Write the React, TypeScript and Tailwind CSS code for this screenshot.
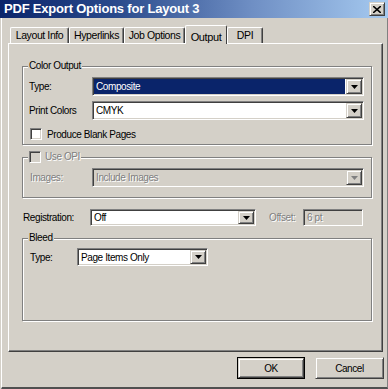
import React from "react";

const sunken =
  "border border-t-[#808080] border-l-[#808080] border-b-white border-r-white shadow-[inset_1px_1px_0_#404040,inset_-1px_-1px_0_#d4d0c8]";
const raised =
  "border border-t-[#d4d0c8] border-l-[#d4d0c8] border-b-[#404040] border-r-[#404040] shadow-[inset_1px_1px_0_#fff,inset_-1px_-1px_0_#808080]";
const etched = "border border-[#808080] shadow-[inset_1px_1px_0_#fff,1px_1px_0_#fff]";
const dimText = "text-[#808080] [text-shadow:1px_1px_0_#fff]";

const Arrow = ({ disabled }: { disabled?: boolean }) => (
  <div className={`w-[16px] h-full flex items-center justify-center bg-[#d4d0c8] ${raised}`}>
    <svg width="7" height="4" viewBox="0 0 7 4">
      <path d="M0 0h7L3.5 4z" fill={disabled ? "#808080" : "#000"} />
    </svg>
  </div>
);

const Select = ({
  value,
  width,
  height = "h-[19px]",
  selected,
  disabled,
}: {
  value: string;
  width: string;
  height?: string;
  selected?: boolean;
  disabled?: boolean;
}) => (
  <div
    className={`${width} ${height} flex items-stretch p-[1px] ${sunken} ${
      disabled ? "bg-[#d4d0c8]" : "bg-white"
    }`}
  >
    <div
      className={`flex-1 flex items-center pl-[2px] ${
        selected ? "bg-[#0a246a] text-white mr-[1px]" : disabled ? dimText : ""
      }`}
    >
      {value}
    </div>
    <Arrow disabled={disabled} />
  </div>
);

const Checkbox = ({ disabled }: { disabled?: boolean }) => (
  <div className={`w-[12px] h-[12px] ${sunken} ${disabled ? "bg-[#d4d0c8]" : "bg-white"}`} />
);

const Group = ({
  legend,
  className,
  children,
}: {
  legend: React.ReactNode;
  className: string;
  children: React.ReactNode;
}) => (
  <div className={`relative w-[350px] ${etched} ${className}`}>
    <div className="absolute -top-[7px] left-[5px] px-[1px] bg-[#d4d0c8] flex items-center gap-[4px] leading-[12px]">
      {legend}
    </div>
    {children}
  </div>
);

const tabs = [
  { label: "Layout Info", w: "w-[59px]" },
  { label: "Hyperlinks", w: "w-[55px]" },
  { label: "Job Options", w: "w-[61px]" },
  { label: "Output", w: "w-[42px]", active: true },
  { label: "DPI", w: "w-[36px]" },
];

export default function App() {
  return (
    <div className="w-[388px] h-[389px] bg-[#d4d0c8] flex flex-col overflow-hidden text-[10px] tracking-[-0.4px] text-black font-['Liberation_Sans',Arial,sans-serif]">
      {/* title bar */}
      <div className="h-[18px] shrink-0 flex items-center justify-between pl-[4px] pr-[3px] bg-[linear-gradient(90deg,#0a246a_0%,#2a4a8c_30%,#6f8fc4_65%,#a6caf0_100%)]">
        <span className="text-white font-bold text-[13px] tracking-[-0.2px]">
          PDF Export Options for Layout 3
        </span>
        <div className={`w-[16px] h-[14px] flex items-center justify-center bg-[#d4d0c8] ${raised}`}>
          <svg width="8" height="7" viewBox="0 0 8 7">
            <path d="M0 0l8 7M8 0L0 7" stroke="#000" strokeWidth="1.6" />
          </svg>
        </div>
      </div>

      {/* body */}
      <div className="flex-1 ml-px border-l border-white border-r border-r-[#808080] border-b-2 border-b-[#505050] flex flex-col">
        {/* tabs */}
        <div className="h-[25px] shrink-0 flex items-end pl-[8px]">
          {tabs.map((t) =>
            t.active ? (
              <div
                key={t.label}
                className={`${t.w} h-[19px] -mb-px relative z-10 bg-[#d4d0c8] border-t border-l border-white border-r border-r-[#404040] rounded-t-[2px] flex items-start justify-center pt-[3px] text-[11px]`}
              >
                {t.label}
              </div>
            ) : (
              <div
                key={t.label}
                className={`${t.w} h-[16px] border-t border-l border-white border-r border-r-[#404040] shadow-[inset_-1px_0_0_#808080] rounded-t-[2px] flex items-center justify-center text-[10.5px]`}
              >
                {t.label}
              </div>
            )
          )}
        </div>

        {/* panel */}
        <div className="ml-[6px] w-[375px] h-[309px] shrink-0 border-t border-l border-white border-r border-r-[#404040] border-b border-b-[#404040] shadow-[inset_-1px_-1px_0_#808080] pl-[13px] pt-[22px]">
          <Group legend={<span>Color Output</span>} className="pt-[10px] pb-[4px] pl-[6px]">
            <div className="flex items-center">
              <span className="w-[63px]">Type:</span>
              <Select value="Composite" width="w-[272px]" selected />
            </div>
            <div className="flex items-center mt-[5px]">
              <span className="w-[63px]">Print Colors</span>
              <Select value="CMYK" width="w-[272px]" />
            </div>
            <div className="flex items-center mt-[8px] pl-[1px] gap-[5px] h-[12px]">
              <Checkbox />
              <span>Produce Blank Pages</span>
            </div>
          </Group>

          <Group
            legend={
              <>
                <Checkbox disabled />
                <span className={dimText}>Use OPI</span>
              </>
            }
            className="mt-[12px] pt-[10px] pb-[10px] pl-[7px]"
          >
            <div className="flex items-center">
              <span className={`w-[62px] ${dimText}`}>Images:</span>
              <Select value="Include Images" width="w-[272px]" disabled />
            </div>
          </Group>

          <div className="flex items-center mt-[11px] pl-[1px]">
            <span className="w-[67px]">Registration:</span>
            <Select value="Off" width="w-[166px]" height="h-[17px]" />
            <span className={`ml-[13px] w-[34px] ${dimText}`}>Offset:</span>
            <div className={`w-[60px] h-[17px] flex items-center pl-[3px] bg-[#d4d0c8] ${sunken} ${dimText}`}>
              6 pt
            </div>
          </div>

          <Group legend={<span>Bleed</span>} className="mt-[12px] pt-[9px] pb-[54px] pl-[7px]">
            <div className="flex items-center">
              <span className="w-[47px]">Type:</span>
              <Select value="Page Items Only" width="w-[131px]" height="h-[18px]" />
            </div>
          </Group>
        </div>

        {/* buttons */}
        <div className="flex justify-end gap-[10px] mt-[5px] pr-[3px]">
          <div className="w-[68px] h-[22px] border border-black">
            <div className={`w-full h-full flex items-center justify-center ${raised}`}>OK</div>
          </div>
          <div className={`w-[69px] h-[22px] flex items-center justify-center ${raised}`}>Cancel</div>
        </div>
      </div>
    </div>
  );
}
